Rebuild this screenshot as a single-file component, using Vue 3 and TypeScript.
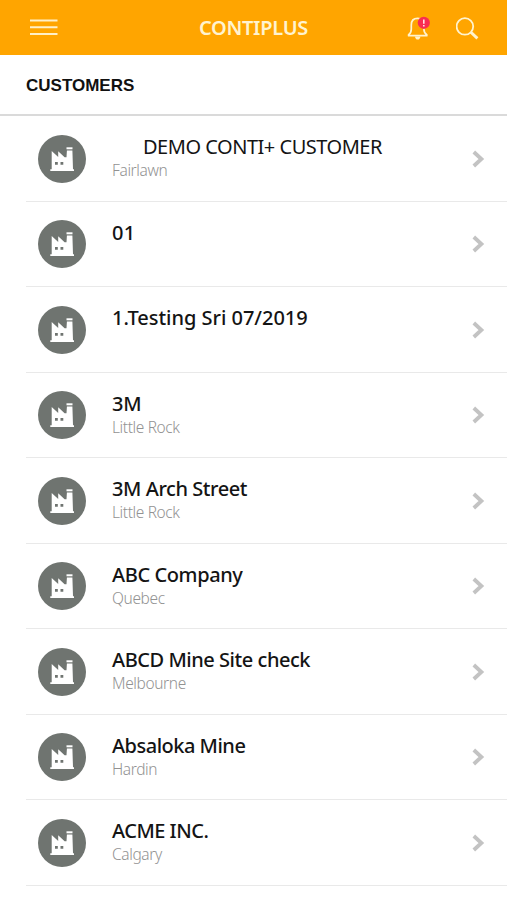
<script setup lang="ts">
interface Customer {
  name: string
  city: string
  tracking: number
  variant?: 'lead'
}

const customers: Customer[] = [
  { name: 'DEMO CONTI+ CUSTOMER', city: 'Fairlawn', tracking: -0.48, variant: 'lead' },
  { name: '01', city: '', tracking: 0.3 },
  { name: '1.Testing Sri 07/2019', city: '', tracking: -0.02 },
  { name: '3M', city: 'Little Rock', tracking: -0.3 },
  { name: '3M Arch Street', city: 'Little Rock', tracking: -0.43 },
  { name: 'ABC Company', city: 'Quebec', tracking: -0.4 },
  { name: 'ABCD Mine Site check', city: 'Melbourne', tracking: -0.46 },
  { name: 'Absaloka Mine', city: 'Hardin', tracking: -0.5 },
  { name: 'ACME INC.', city: 'Calgary', tracking: -0.5 },
]
</script>

<template>
  <div class="screen">
    <header class="bar">
      <button class="icon-button" aria-label="Menu">
        <svg width="28" height="17" viewBox="0 0 28 17">
          <path d="M0 1.5H27.5M0 8.2H27.5M0 15H27.5" stroke="#fff0c8" stroke-width="1.9" />
        </svg>
      </button>
      <h1 class="title">CONTIPLUS</h1>
      <div class="actions">
        <button class="icon-button" aria-label="Notifications">
          <svg width="24" height="26" viewBox="0 0 24 26" fill="none">
            <path d="M1.6 20.7V19.7C3.6 18.4 4.3 16.6 4.3 14V10C4.3 5.8 6.9 3.4 10.6 3.4S16.9 5.8 16.9 10V14C16.9 16.6 17.6 18.4 19.8 19.7V20.7Z" stroke="#fff3cf" stroke-width="1.7" stroke-linejoin="round" />
            <path d="M8 21.5H13.4C13.2 23.5 12.2 24.6 10.7 24.6S8.2 23.5 8 21.5Z" fill="#fff3cf" />
            <circle cx="16.8" cy="7.8" r="6.1" fill="#f92d51" />
            <path d="M16.8 4.4V8.7M16.8 9.9V11.4" stroke="#ffe3e3" stroke-width="1.6" />
          </svg>
        </button>
        <button class="icon-button" aria-label="Search">
          <svg width="24" height="24" viewBox="0 0 24 24" fill="none" stroke="#fff3cf">
            <circle cx="8.9" cy="10.4" r="8.3" stroke-width="1.8" />
            <path d="M14.9 16.2L21.4 22.4" stroke-width="2.9" />
          </svg>
        </button>
      </div>
    </header>

    <h2 class="section">CUSTOMERS</h2>

    <ul class="list">
      <li v-for="c in customers" :key="c.name" class="row">
        <svg class="avatar" width="48" height="48" viewBox="0 0 48 48">
          <circle cx="24" cy="24" r="24" fill="#6f7470" />
          <path fill="#fff" d="M13.7 16L20.2 22V16.2L26.6 22.2H28.5L28.9 15.4H34.4L35 34.3H36V36H12.3V34.3H13.7Z" />
          <path fill="#fff" d="M28.5 12.3H34.5V14.3H28.5Z" />
          <path fill="#6f7470" d="M17 26.9H19.8V29.7H17ZM22.5 26.9H25.3V29.7H22.5Z" />
        </svg>
        <div class="text">
          <div class="name" :class="c.variant" :style="{ letterSpacing: c.tracking + 'px' }">{{ c.name }}</div>
          <div class="city">{{ c.city }}</div>
        </div>
        <svg class="chevron" width="14" height="18" viewBox="0 0 14 18" fill="none">
          <path d="M1.8 2L9.4 9L1.8 16" stroke="#c3c3c3" stroke-width="3.8" />
        </svg>
      </li>
    </ul>
  </div>
</template>

<style>
body {
  margin: 0;
  background: #fff;
}
</style>

<style scoped>
.screen {
  width: 507px;
  height: 900px;
  overflow: hidden;
  background: #fff;
  font-family: 'Noto Sans', sans-serif;
}
.bar {
  display: grid;
  grid-template-columns: 100px 1fr 100px;
  align-items: center;
  box-sizing: border-box;
  height: 54.5px;
  padding: 1px 27px 0 30px;
  background: #ffa500;
}
.icon-button {
  display: flex;
  padding: 0;
  border: 0;
  background: none;
}
.title {
  margin: 0 3px 0 0;
  color: #fff3cf;
  font-size: 20px;
  font-weight: 600;
  letter-spacing: -0.3px;
  text-align: center;
}
.actions {
  display: flex;
  align-items: center;
  justify-content: flex-end;
  gap: 25px;
}
.section {
  display: flex;
  align-items: center;
  box-sizing: border-box;
  height: 61.5px;
  margin: 0;
  padding: 4px 0 0 26px;
  border-bottom: 2px solid #dadada;
  color: #111;
  font-family: 'Liberation Sans', sans-serif;
  font-size: 17px;
  font-weight: 700;
}
.list {
  margin: 0;
  padding: 0 0 0 26px;
  list-style: none;
}
.row {
  display: flex;
  align-items: center;
  box-sizing: border-box;
  height: 85.5px;
  padding: 1px 21px 0 12px;
  border-bottom: 1.5px solid #e9e9e9;
}
.avatar {
  flex: none;
}
.text {
  flex: 1;
  height: 49px;
  padding-left: 26px;
}
.name {
  height: 25px;
  color: #141414;
  font-size: 20px;
  font-weight: 460;
  line-height: 26px;
  white-space: nowrap;
}
.name.lead {
  padding-left: 31px;
  font-weight: 400;
}
.city {
  height: 20px;
  color: #929292;
  font-size: 15.5px;
  font-weight: 300;
  line-height: 22px;
  letter-spacing: -0.38px;
}
.chevron {
  flex: none;
}
</style>
